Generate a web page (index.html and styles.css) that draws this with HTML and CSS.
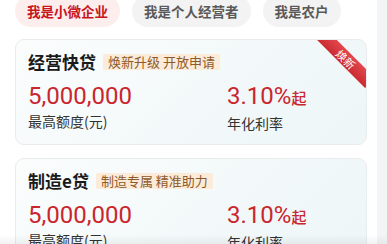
FILE: index.html
```html
<!DOCTYPE html>
<html lang="zh-CN">
<head>
<meta charset="utf-8">
<link rel="stylesheet" href="styles.css">
</head>
<body>
<div class="page">
  <main class="main">
    <nav class="tabs">
      <span class="tab active">我是小微企业</span>
      <span class="tab">我是个人经营者</span>
      <span class="tab">我是农户</span>
    </nav>
    <section class="card">
      <div class="ribbon"><span>焕新</span></div>
      <div class="head">
        <h2 class="title">经营快贷</h2>
        <span class="badge">焕新升级 开放申请</span>
      </div>
      <div class="stats">
        <div class="stat">
          <div class="num">5,000,000</div>
          <div class="label">最高额度(元)</div>
        </div>
        <div class="stat">
          <div class="num">3.10%<small>起</small></div>
          <div class="label">年化利率</div>
        </div>
      </div>
    </section>
    <section class="card">
      <div class="head">
        <h2 class="title">制造e贷</h2>
        <span class="badge">制造专属 精准助力</span>
      </div>
      <div class="stats">
        <div class="stat">
          <div class="num">5,000,000</div>
          <div class="label">最高额度(元)</div>
        </div>
        <div class="stat">
          <div class="num">3.10%<small>起</small></div>
          <div class="label">年化利率</div>
        </div>
      </div>
    </section>
  </main>
  <aside class="side"></aside>
</div>
<div class="shade"></div>
</body>
</html>
```

FILE: styles.css
```css
* { box-sizing: border-box; }
html, body { margin: 0; padding: 0; background: #fff; }
body {
  font-family: "Noto Sans CJK SC", "Noto Sans", sans-serif;
  color: #222;
  width: 387px;
  height: 244px;
  overflow: hidden;
}
.page {
  display: flex;
  height: 244px;
}
.main {
  width: 377px;
  padding: 0 10px 0 15px;
}
.side {
  flex: 1;
  background: #f3f4f6;
}
.tabs {
  display: flex;
  gap: 12px;
  margin-top: -5px;
  margin-bottom: 12px;
}
.tab {
  height: 32px;
  line-height: 32px;
  padding: 0 12px;
  border-radius: 16px;
  background: #f3f3f3;
  color: #5a5a5a;
  font-size: 13.5px;
  font-weight: 700;
  white-space: nowrap;
}
.tab.active {
  background: #fdeeee;
  color: #c8161d;
}
.card {
  position: relative;
  overflow: hidden;
  border: 1px solid #e9eced;
  border-radius: 9px;
  background: linear-gradient(135deg, #fbfdfd 0%, #f2f8f9 60%, #eef6f7 100%);
  padding: 10px 12px 11px 12px;
  margin-bottom: 13px;
}
.head {
  display: flex;
  align-items: center;
  gap: 7px;
  height: 24px;
}
.title {
  margin: 0;
  font-size: 17px;
  line-height: 24px;
  font-weight: 700;
  color: #1a1a1a;
}
.badge {
  background: #fcebd8;
  color: #8c5a2c;
  font-size: 13px;
  line-height: 16px;
  padding: 0 5px;
  border-radius: 2px;
  white-space: nowrap;
}
.stats {
  display: grid;
  grid-template-columns: 199px 1fr;
  margin-top: 7px;
}
.num {
  font-family: Roboto, "Noto Sans", sans-serif;
  font-size: 24px;
  line-height: 30px;
  color: #c9262e;
  white-space: nowrap;
}
.num small {
  font-family: "Noto Sans CJK SC", sans-serif;
  font-size: 15px;
  font-weight: 500;
}
.label {
  font-size: 14px;
  line-height: 20px;
  color: #333;
}
.ribbon {
  position: absolute;
  top: 0;
  right: 0;
  width: 52px;
  height: 52px;
  overflow: hidden;
}
.ribbon span {
  position: absolute;
  top: 12px;
  right: -14px;
  width: 68px;
  height: 14px;
  line-height: 14px;
  transform: rotate(45deg);
  background: linear-gradient(#e1484e, #cc2a31);
  color: #fff;
  font-size: 11px;
  text-align: center;
}
.shade {
  position: fixed;
  left: 0;
  right: 0;
  bottom: 0;
  height: 9px;
  background: linear-gradient(rgba(0,0,0,0), rgba(0,0,0,0.05));
}
```
